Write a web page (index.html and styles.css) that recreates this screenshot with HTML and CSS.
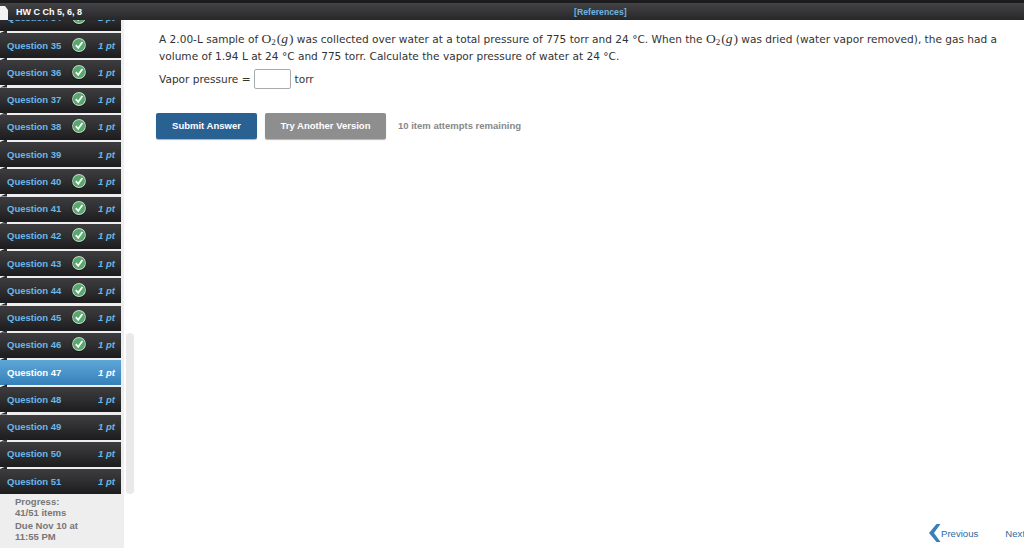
FILE: index.html
```html
<!DOCTYPE html>
<html lang="en">
<head>
  <meta charset="UTF-8">
  <meta name="viewport" content="width=device-width, initial-scale=1.0">
  <title>HW C Ch 5, 6, 8</title>
  <link rel="stylesheet" href="styles.css">
</head>
<body>
  <svg class="defs" width="0" height="0">
    <symbol id="check" viewBox="0 0 16 16">
      <circle cx="8" cy="8.5" r="7.4" fill="#1a1a1a"/>
      <circle cx="8" cy="8" r="6.9" fill="#c9dccf"/>
      <circle cx="8" cy="8" r="6.1" fill="#58a76d"/>
      <path d="M4.8 8.2 7.2 10.8 11.4 4.9" fill="none" stroke="#fff" stroke-width="1.7"/>
    </symbol>
  </svg>
  <div class="header">
    <div class="title">HW C Ch 5, 6, 8</div>
    <a class="references">[References]</a>
  </div>
  <div class="content">
    <div class="sidebar">
      <div class="questions">
        <div class="question"><span class="name">Question 34</span><svg class="done"><use href="#check"/></svg><span class="points">1 pt</span></div>
        <div class="question"><span class="name">Question 35</span><svg class="done"><use href="#check"/></svg><span class="points">1 pt</span></div>
        <div class="question"><span class="name">Question 36</span><svg class="done"><use href="#check"/></svg><span class="points">1 pt</span></div>
        <div class="question"><span class="name">Question 37</span><svg class="done"><use href="#check"/></svg><span class="points">1 pt</span></div>
        <div class="question"><span class="name">Question 38</span><svg class="done"><use href="#check"/></svg><span class="points">1 pt</span></div>
        <div class="question"><span class="name">Question 39</span><span class="points">1 pt</span></div>
        <div class="question"><span class="name">Question 40</span><svg class="done"><use href="#check"/></svg><span class="points">1 pt</span></div>
        <div class="question"><span class="name">Question 41</span><svg class="done"><use href="#check"/></svg><span class="points">1 pt</span></div>
        <div class="question"><span class="name">Question 42</span><svg class="done"><use href="#check"/></svg><span class="points">1 pt</span></div>
        <div class="question"><span class="name">Question 43</span><svg class="done"><use href="#check"/></svg><span class="points">1 pt</span></div>
        <div class="question"><span class="name">Question 44</span><svg class="done"><use href="#check"/></svg><span class="points">1 pt</span></div>
        <div class="question"><span class="name">Question 45</span><svg class="done"><use href="#check"/></svg><span class="points">1 pt</span></div>
        <div class="question"><span class="name">Question 46</span><svg class="done"><use href="#check"/></svg><span class="points">1 pt</span></div>
        <div class="question active"><span class="name">Question 47</span><span class="points">1 pt</span></div>
        <div class="question"><span class="name">Question 48</span><span class="points">1 pt</span></div>
        <div class="question"><span class="name">Question 49</span><span class="points">1 pt</span></div>
        <div class="question"><span class="name">Question 50</span><span class="points">1 pt</span></div>
        <div class="question"><span class="name">Question 51</span><span class="points">1 pt</span></div>
      </div>
      <div class="progress">
        <p>Progress:<br>41/51 items</p>
        <p>Due Nov 10 at<br>11:55 PM</p>
      </div>
    </div>
    <div class="gutter"><div class="thumb"></div></div>
    <div class="main">
      <p class="problem">A 2.00-L sample of <span class="math">O<sub>2</sub><span class="paren">(</span><i>g</i><span class="paren">)</span></span> was collected over water at a total pressure of 775 torr and 24 °C. When the <span class="math">O<sub>2</sub><span class="paren">(</span><i>g</i><span class="paren">)</span></span> was dried (water vapor removed), the gas had a volume of 1.94 L at 24 °C and 775 torr. Calculate the vapor pressure of water at 24 °C.</p>
      <div class="answer">
        <label for="vapor">Vapor pressure =</label>
        <input type="text" id="vapor" class="answer-box">
        <span class="unit">torr</span>
      </div>
      <div class="actions">
        <button class="button submit">Submit Answer</button>
        <button class="button another">Try Another Version</button>
        <span class="attempts">10 item attempts remaining</span>
      </div>
      <div class="pager">
        <svg class="chevron" width="12" height="18" viewBox="0 0 12 18"><path d="M11.5 0 5 9l6.5 9H7.5L0 9l7.5-9z" fill="#3b7fb8"/></svg>
        <a class="prev">Previous</a>
        <a class="next">Next</a>
      </div>
    </div>
  </div>
</body>
</html>
```

FILE: styles.css
```css
html, body {
  height: 100%;
}
body {
  font-family: "DejaVu Sans", Verdana, sans-serif;
  background-color: #ffffff;
  margin: 0;
  height: 548px;
  overflow: hidden;
  display: flex;
  flex-direction: column;
}
.defs {
  position: absolute;
}
.header {
  height: 20px;
  flex: none;
  box-sizing: border-box;
  border-top: 3px solid #1c1c1e;
  padding-top: 1px;
  background: linear-gradient(#444446, #27272a);
  display: flex;
  align-items: center;
  position: relative;
  z-index: 2;
}
.header::before {
  content: "";
  position: absolute;
  left: 0;
  top: 3px;
  bottom: 0;
  width: 8px;
  background-color: #f2f2f2;
  clip-path: polygon(0 0, 5px 0, 100% 4px, 100% 100%, 0 100%);
}
.title {
  font-family: "Liberation Sans", Arial, sans-serif;
  font-size: 9px;
  font-weight: bold;
  color: #ffffff;
  margin-left: 16px;
  width: 558px;
}
.references {
  font-family: "Liberation Sans", Arial, sans-serif;
  font-size: 8.7px;
  font-weight: bold;
  color: #6fb3e0;
}
.content {
  flex: 1;
  display: flex;
  min-height: 0;
}
.sidebar {
  width: 124px;
  flex: none;
  background-color: #eeeeee;
  display: flex;
  flex-direction: column;
  overflow: hidden;
}
.questions {
  margin-top: -14.25px;
  flex: none;
}
.question {
  height: 25px;
  box-sizing: border-box;
  padding-bottom: 1px;
  margin-bottom: 2.25px;
  margin-right: 3px;
  background: linear-gradient(#3d3d3f, #2e2e30 50%, #1c1c1e);
  display: flex;
  align-items: center;
  position: relative;
  font-family: "Liberation Sans", Arial, sans-serif;
  font-size: 9.5px;
  font-weight: bold;
  color: #6ab7e6;
}
.question:last-child {
  margin-bottom: 0;
}
.question::before {
  content: "";
  position: absolute;
  left: 0;
  top: -3px;
  width: 7px;
  height: 3px;
  background-color: #2a2a2c;
  clip-path: polygon(0 100%, 100% 0, 100% 100%);
}
.question.active {
  background: linear-gradient(#5fa6d6, #4a94cb 50%, #3680ba);
  color: #ffffff;
}
.name {
  margin-left: 7px;
}
.done {
  position: absolute;
  left: 71px;
  top: 3.5px;
  width: 16px;
  height: 16px;
}
.points {
  margin-left: auto;
  margin-right: 6px;
  font-style: italic;
}
.progress {
  font-family: "Liberation Sans", Arial, sans-serif;
  font-size: 9.5px;
  font-weight: bold;
  line-height: 11px;
  color: #777777;
  padding: 2px 0 0 15px;
}
.progress p {
  margin: 0 0 2px;
}
.gutter {
  width: 10px;
  flex: none;
  padding: 313px 0 0 2px;
  box-sizing: border-box;
}
.thumb {
  width: 8px;
  height: 161px;
  background-color: #e9e9e9;
  border-radius: 4px;
}
.main {
  flex: 1;
  min-width: 0;
  padding: 10px 0 0 25px;
  display: flex;
  flex-direction: column;
  font-size: 10.57px;
  color: #333333;
}
.problem {
  margin: 0;
  line-height: 17px;
  width: 845px;
}
.math {
  font-family: "Liberation Serif", "Times New Roman", serif;
  font-size: 13.5px;
}
.math sub {
  font-size: 9px;
  line-height: 0;
  vertical-align: -2px;
}
.math .paren {
  margin-left: 1px;
}
.answer {
  display: flex;
  align-items: center;
  gap: 3px;
  margin-top: 4px;
}
.answer-box {
  width: 37px;
  height: 20px;
  box-sizing: border-box;
  border: 1px solid #aaaaaa;
  border-radius: 2px;
  padding: 0;
}
.unit {
  margin-left: 1px;
}
.actions {
  display: flex;
  align-items: center;
  margin-top: 24px;
  margin-left: -3px;
}
.button {
  font-family: "Liberation Sans", Arial, sans-serif;
  font-size: 9.5px;
  font-weight: bold;
  color: #ffffff;
  border: none;
  border-radius: 2px;
  height: 26px;
  padding: 0 0 2px;
  box-shadow: 0 1px 1px rgba(0, 0, 0, 0.3);
}
.submit {
  width: 101px;
  background-color: #2a6193;
  margin-right: 8px;
}
.another {
  width: 121px;
  background-color: #8e8e8e;
  margin-right: 12px;
}
.attempts {
  font-family: "Liberation Sans", Arial, sans-serif;
  font-size: 9.5px;
  font-weight: bold;
  color: #888888;
  padding-bottom: 1px;
}
.pager {
  margin-top: auto;
  margin-bottom: 6px;
  margin-left: 770px;
  display: flex;
  align-items: center;
  font-family: "Liberation Sans", Arial, sans-serif;
  font-size: 9.6px;
  color: #2f6a9e;
  white-space: nowrap;
}
.chevron {
  flex: none;
}
.next {
  margin-left: 27px;
}
```
